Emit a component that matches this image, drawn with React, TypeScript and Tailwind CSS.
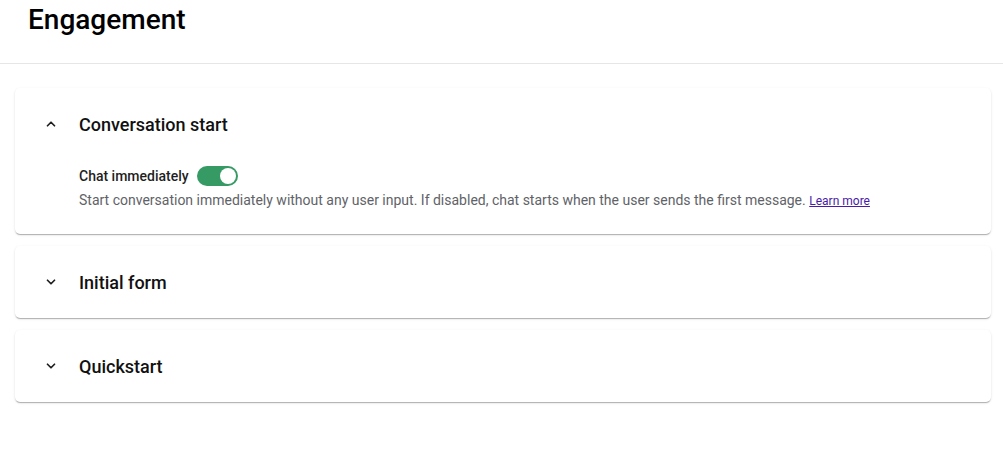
import { useState } from "react";

function Chevron({ up }: { up?: boolean }) {
  return (
    <svg width="14" height="14" viewBox="0 0 24 24" className="shrink-0">
      <path
        d={up ? "M6 15l6-6 6 6" : "M6 9l6 6 6-6"}
        fill="none"
        stroke="#1f1f1f"
        strokeWidth="3"
        strokeLinecap="round"
        strokeLinejoin="round"
      />
    </svg>
  );
}

function Toggle({ on, onChange }: { on: boolean; onChange: () => void }) {
  return (
    <button
      onClick={onChange}
      className={`relative w-[41px] h-[20px] rounded-full ${on ? "bg-[#369a64]" : "bg-gray-300"}`}
    >
      <span
        className={`absolute top-[2px] w-[16px] h-[16px] rounded-full bg-white ${on ? "left-[23px]" : "left-[2px]"}`}
      />
    </button>
  );
}

function Panel({ title, open, children }: { title: string; open?: boolean; children?: React.ReactNode }) {
  return (
    <div className="bg-white rounded-[5px] shadow-[0_2px_1px_-1px_rgba(0,0,0,0.18),0_1px_1px_0_rgba(0,0,0,0.1),0_1px_3px_0_rgba(0,0,0,0.1)]">
      <div className="h-[72px] flex items-center pl-[29px]">
        <Chevron up={open} />
        <span className="ml-[21px] text-[18px] font-medium text-[#111]">{title}</span>
      </div>
      {open && <div className="pl-[64px] pb-[23px]">{children}</div>}
    </div>
  );
}

export default function App() {
  const [chat, setChat] = useState(true);
  return (
    <div className="w-[1003px] h-[450px] bg-white overflow-hidden font-['Roboto',sans-serif]">
      <div className="h-[64px] border-b border-[#e6e6e6] pl-[28px] pt-[2px]">
        <h1 className="text-[28px] font-medium text-black leading-[36px]">Engagement</h1>
      </div>
      <div className="pl-[15px] pr-[12px] pt-[24px] flex flex-col gap-[12px]">
        <Panel title="Conversation start" open>
          <div className="flex items-center gap-[8px] h-[20px] mt-[6px]">
            <span className="text-[14px] font-medium text-[#1f1f1f]">Chat immediately</span>
            <Toggle on={chat} onChange={() => setChat(!chat)} />
          </div>
          <p className="text-[14px] text-[#5f6368] leading-[20px] mt-[4px]">
            Start conversation immediately without any user input. If disabled, chat starts when the user sends the first message.{" "}
            <a href="#" className="text-[12px] text-[#4a1aa8] underline">Learn more</a>
          </p>
        </Panel>
        <Panel title="Initial form" />
        <Panel title="Quickstart" />
      </div>
    </div>
  );
}
